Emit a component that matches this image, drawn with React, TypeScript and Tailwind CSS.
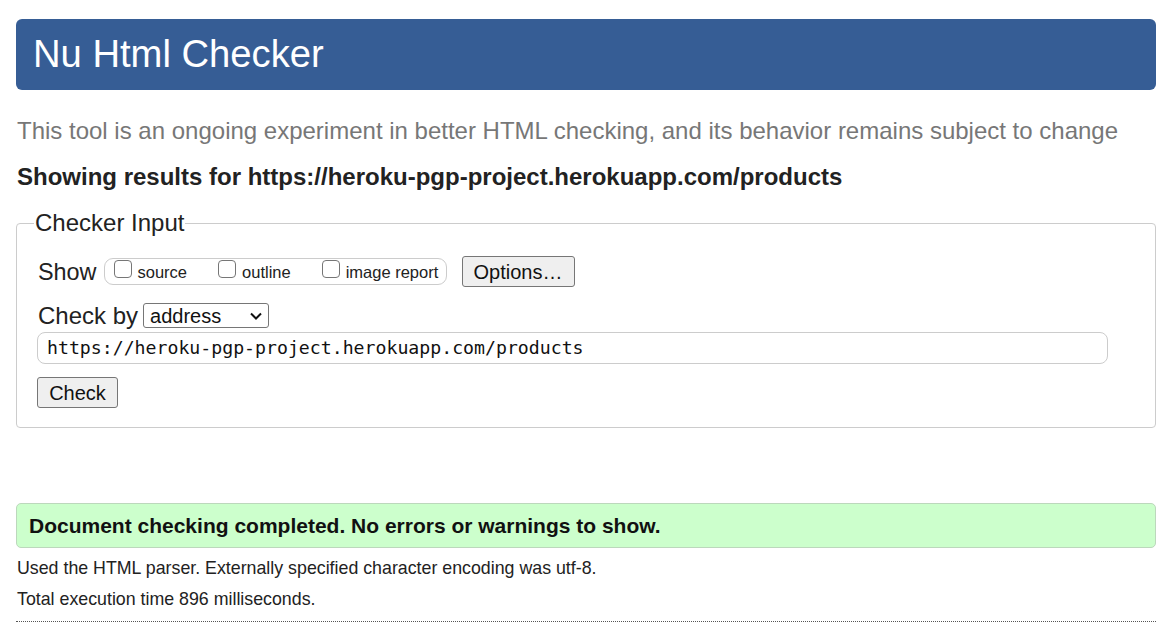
import React from "react";

function Box({ label, first }: { label: string; first?: boolean }) {
  return (
    <label className={`flex items-center ${first ? "" : "ml-[31px]"}`}>
      <span className="mb-[6px] h-[18px] w-[18px] rounded-[4px] border border-[#767676] bg-white" />
      <span className="ml-[6px] text-[16.5px] leading-[20px] text-[#222]">{label}</span>
    </label>
  );
}

export default function App() {
  return (
    <div className="min-h-[637px] bg-white pl-4 pr-[19px] pt-[19px] font-['Liberation_Sans',Arial,sans-serif] text-[#222]">
      <div className="flex h-[71px] items-center rounded-[6px] bg-[#365d95] px-[17px]">
        <h1 className="text-[38.2px] leading-none text-white">Nu Html Checker</h1>
      </div>
      <p className="mt-[27px] pl-[1px] text-[24px] leading-[28px] text-[#777]">
        This tool is an ongoing experiment in better HTML checking, and its behavior remains subject to change
      </p>
      <p className="mt-[18px] pl-[1px] text-[24px] font-bold leading-[28px] text-[#222]">
        Showing results for https://heroku-pgp-project.herokuapp.com/products
      </p>
      <fieldset className="mt-[20px] rounded-[4px] border border-[#cccccc] pb-[19px] pl-[20px] pr-[20px]">
        <legend className="ml-[-3px] px-[1px] text-[24px] leading-[24px] text-[#222]">Checker Input</legend>
        <div className="ml-[1px] mt-[21px] flex h-[31px] items-center">
          <span className="text-[23.4px] leading-[28px]">Show</span>
          <div className="ml-[7px] flex h-[27px] w-[343px] items-center rounded-[9px] border border-[#cccccc] pl-[9px]">
            <Box label="source" first />
            <Box label="outline" />
            <Box label="image report" />
          </div>
          <button className="ml-[15px] h-[31px] w-[113px] rounded-[3px] border border-[#767676] bg-[#efefef] text-[20px] leading-none text-[#111]">
            Options…
          </button>
        </div>
        <div className="ml-[1px] mt-[16px] flex h-[25px] items-center">
          <span className="text-[24px] leading-[28px]">Check by</span>
          <div className="ml-[5px] flex h-[25px] w-[126px] items-center justify-between rounded-[3px] border border-[#767676] pl-[6px] pr-[5px]">
            <span className="text-[20px] leading-none text-[#111]">address</span>
            <svg width="14" height="10" viewBox="0 0 14 10">
              <path d="M2 2.5 L7 7.5 L12 2.5" fill="none" stroke="#111" strokeWidth="2" />
            </svg>
          </div>
        </div>
        <div className="mt-[4px] flex h-[32px] w-[1071px] items-center rounded-[8px] border border-[#cccccc] px-[9px]">
          <span className="font-['DejaVu_Sans_Mono',monospace] text-[18.2px] leading-none text-[#111]">
            https://heroku-pgp-project.herokuapp.com/products
          </span>
        </div>
        <button className="mt-[13px] block h-[31px] w-[81px] rounded-[3px] border border-[#767676] bg-[#efefef] text-[20px] leading-none text-[#111]">
          Check
        </button>
      </fieldset>
      <div className="mt-[75px] flex h-[45px] items-center rounded-[5px] border border-[#bcd8bc] bg-[#ccffcc] px-[12px]">
        <span className="text-[21px] font-bold leading-none text-[#111]">
          Document checking completed. No errors or warnings to show.
        </span>
      </div>
      <p className="mt-[10px] pl-[1px] text-[17.8px] leading-[20px] text-[#222]">
        Used the HTML parser. Externally specified character encoding was utf-8.
      </p>
      <p className="mt-[11px] pl-[1px] text-[17.8px] leading-[20px] text-[#222]">Total execution time 896 milliseconds.</p>
      <div className="mt-[12px] border-t border-dotted border-[#555]" />
    </div>
  );
}
